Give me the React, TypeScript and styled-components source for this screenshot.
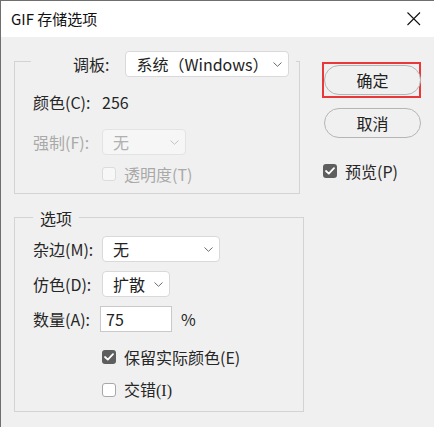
import styled, { createGlobalStyle } from 'styled-components';

const GlobalStyle = createGlobalStyle`
  html, body {
    margin: 0;
    padding: 0;
    background: #f0f0f0;
  }
  * {
    box-sizing: border-box;
  }
`;

const Chevron = ({ disabled = false }: { disabled?: boolean }) => (
  <svg width='9' height='5' viewBox='0 0 9 5'>
    <polyline
      points='0.5,0.5 4.5,4.3 8.5,0.5'
      fill='none'
      stroke={disabled ? '#c4c4c4' : '#6b6b6b'}
      strokeWidth='1'
    />
  </svg>
);

const CheckMark = () => (
  <svg width='10' height='8' viewBox='0 0 10 8'>
    <polyline
      points='1,4 3.8,6.6 9,1.2'
      fill='none'
      stroke='#ffffff'
      strokeWidth='1.8'
      strokeLinecap='round'
      strokeLinejoin='round'
    />
  </svg>
);

interface CheckProps {
  checked?: boolean;
  disabled?: boolean;
  label: React.ReactNode;
}

const Check = ({ checked = false, disabled = false, label }: CheckProps) => (
  <CheckRow>
    <Box $checked={checked} $disabled={disabled}>
      {checked && <CheckMark />}
    </Box>
    <CheckText $disabled={disabled}>{label}</CheckText>
  </CheckRow>
);

const GifSaveOptions = () => {
  return (
    <>
      <GlobalStyle />
      <Window>
        <TitleBar>
          <Title>GIF 存储选项</Title>
          <svg width='14' height='14' viewBox='0 0 14 14'>
            <path d='M0.5 0.5 L13 13 M13 0.5 L0.5 13' stroke='#111' strokeWidth='1.1' />
          </svg>
        </TitleBar>

        <Body>
          <LeftColumn>
            {/* 调板 */}
            <Group $width={286}>
              <Legend $x={16} $padLeft={42} $height={26}>
                <Label>调板:</Label>
                <Select $width={164} style={{ marginLeft: 16 }}>
                  <span>系统（Windows）</span>
                  <Chevron />
                </Select>
              </Legend>
              <Row $mt={12}>
                <Label>颜色(C):</Label>
                <Label>256</Label>
              </Row>
              <Row $mt={14}>
                <Label $disabled>强制(F):</Label>
                <Select $width={84} $disabled>
                  <span>无</span>
                  <Chevron disabled />
                </Select>
              </Row>
              <Row $mt={6}>
                <span />
                <Check disabled label='透明度(T)' />
              </Row>
              <Spacer $h={6} />
            </Group>

            {/* 选项 */}
            <Group $width={290} style={{ marginTop: 23 }}>
              <Legend $x={18} $padLeft={7} $height={22}>
                <Label>选项</Label>
              </Legend>
              <Row $mt={7}>
                <Label>杂边(M):</Label>
                <Select $width={118}>
                  <span>无</span>
                  <Chevron />
                </Select>
              </Row>
              <Row $mt={9}>
                <Label>仿色(D):</Label>
                <Select $width={68}>
                  <span>扩散</span>
                  <Chevron />
                </Select>
              </Row>
              <Row $mt={9}>
                <Label>数量(A):</Label>
                <InputWrap>
                  <Amount readOnly value='75' />
                  <Label>%</Label>
                </InputWrap>
              </Row>
              <Row $mt={12}>
                <span />
                <Check checked label='保留实际颜色(E)' />
              </Row>
              <Row $mt={7}>
                <span />
                <Check
                  label={
                    <>
                      交错<Serif>(I)</Serif>
                    </>
                  }
                />
              </Row>
              <Spacer $h={8} />
            </Group>
          </LeftColumn>

          <RightColumn>
            <Highlight>
              <Button>确定</Button>
            </Highlight>
            <Button style={{ marginTop: 10 }}>取消</Button>
            <PreviewRow>
              <Check checked label='预览(P)' />
            </PreviewRow>
          </RightColumn>
        </Body>
      </Window>
    </>
  );
};

export default GifSaveOptions;

const Window = styled.div`
  width: 434px;
  height: 427px;
  border-top: 1px solid #6f6f6f;
  border-left: 1px solid #6f6f6f;
  background: #f0f0f0;
  display: flex;
  flex-direction: column;
  overflow: hidden;
  font-family: 'Noto Sans CJK SC', 'Noto Sans', sans-serif;
  color: #222;
`;

const TitleBar = styled.div`
  height: 36px;
  flex-shrink: 0;
  background: #ffffff;
  display: flex;
  align-items: center;
  justify-content: space-between;
  padding: 0 13px 0 10px;
`;

const Title = styled.div`
  font-size: 15px;
  line-height: 20px;
  color: #111;
`;

const Body = styled.div`
  flex: 1;
  display: flex;
  align-items: flex-start;
  padding: 24px 0 0 13px;
`;

const LeftColumn = styled.div`
  width: 290px;
  display: flex;
  flex-direction: column;
`;

const Group = styled.div<{ $width: number }>`
  width: ${({ $width }) => $width}px;
  border: 1px solid #d3d3d3;
  display: flex;
  flex-direction: column;
`;

const Legend = styled.div<{ $x: number; $padLeft: number; $height: number }>`
  align-self: flex-start;
  display: flex;
  align-items: center;
  height: ${({ $height }) => $height}px;
  margin: -11px 0 0 ${({ $x }) => $x}px;
  padding: 0 7px 0 ${({ $padLeft }) => $padLeft}px;
  background: #f0f0f0;
`;

const Label = styled.span<{ $disabled?: boolean }>`
  font-size: 16px;
  line-height: 22px;
  white-space: nowrap;
  color: ${({ $disabled }) => ($disabled ? '#a9a9a9' : '#262626')};
`;

const Row = styled.div<{ $mt: number }>`
  display: grid;
  grid-template-columns: 69px 1fr;
  align-items: center;
  height: 26px;
  margin-top: ${({ $mt }) => $mt}px;
  padding-left: 18px;
`;

const Spacer = styled.div<{ $h: number }>`
  height: ${({ $h }) => $h}px;
`;

const Select = styled.div<{ $width: number; $disabled?: boolean }>`
  width: ${({ $width }) => $width}px;
  height: 26px;
  display: flex;
  align-items: center;
  justify-content: space-between;
  padding: 0 6px 0 10px;
  border: 1px solid ${({ $disabled }) => ($disabled ? '#e3e3e3' : '#d9d9d9')};
  border-radius: 4px;
  background: ${({ $disabled }) => ($disabled ? '#f6f6f6' : '#ffffff')};
  font-size: 16px;
  line-height: 22px;
  white-space: nowrap;
  color: ${({ $disabled }) => ($disabled ? '#b0b0b0' : '#222')};

  svg {
    flex-shrink: 0;
  }
`;

const InputWrap = styled.div`
  display: flex;
  align-items: center;
  gap: 9px;
`;

const Amount = styled.input`
  width: 72px;
  height: 26px;
  margin-left: -2px;
  padding: 0 0 0 5px;
  border: 1px solid #c9c9c9;
  background: #ffffff;
  font-family: inherit;
  font-size: 16px;
  color: #222;
  outline: none;
`;

const CheckRow = styled.div`
  display: flex;
  align-items: center;
  gap: 8px;
`;

const Box = styled.span<{ $checked: boolean; $disabled: boolean }>`
  width: 14px;
  height: 14px;
  border-radius: 3px;
  display: flex;
  align-items: center;
  justify-content: center;
  background: ${({ $checked, $disabled }) =>
    $checked ? '#5e5e5e' : $disabled ? '#f7f7f7' : '#ffffff'};
  border: ${({ $checked, $disabled }) =>
    $checked ? 'none' : `1px solid ${$disabled ? '#dcdcdc' : '#a8a8a8'}`};
`;

const CheckText = styled.span<{ $disabled: boolean }>`
  font-size: 16px;
  line-height: 22px;
  white-space: nowrap;
  color: ${({ $disabled }) => ($disabled ? '#a9a9a9' : '#262626')};
`;

const Serif = styled.span`
  font-family: 'Liberation Serif', serif;
`;

const RightColumn = styled.div`
  width: 97px;
  margin: 1px 0 0 20px;
  display: flex;
  flex-direction: column;
`;

const Highlight = styled.div`
  margin-left: -2px;
  padding: 1px 1px 1px 0;
  border: 2px solid #e8383a;
`;

const Button = styled.button`
  display: block;
  width: 97px;
  height: 30px;
  padding: 0;
  border: 1px solid #b5b5b5;
  border-radius: 15px;
  background: #f0f0f0;
  font-family: inherit;
  font-size: 16px;
  color: #222;
`;

const PreviewRow = styled.div`
  height: 26px;
  margin: 20px 0 0 -1px;
  display: flex;
  align-items: center;
`;
